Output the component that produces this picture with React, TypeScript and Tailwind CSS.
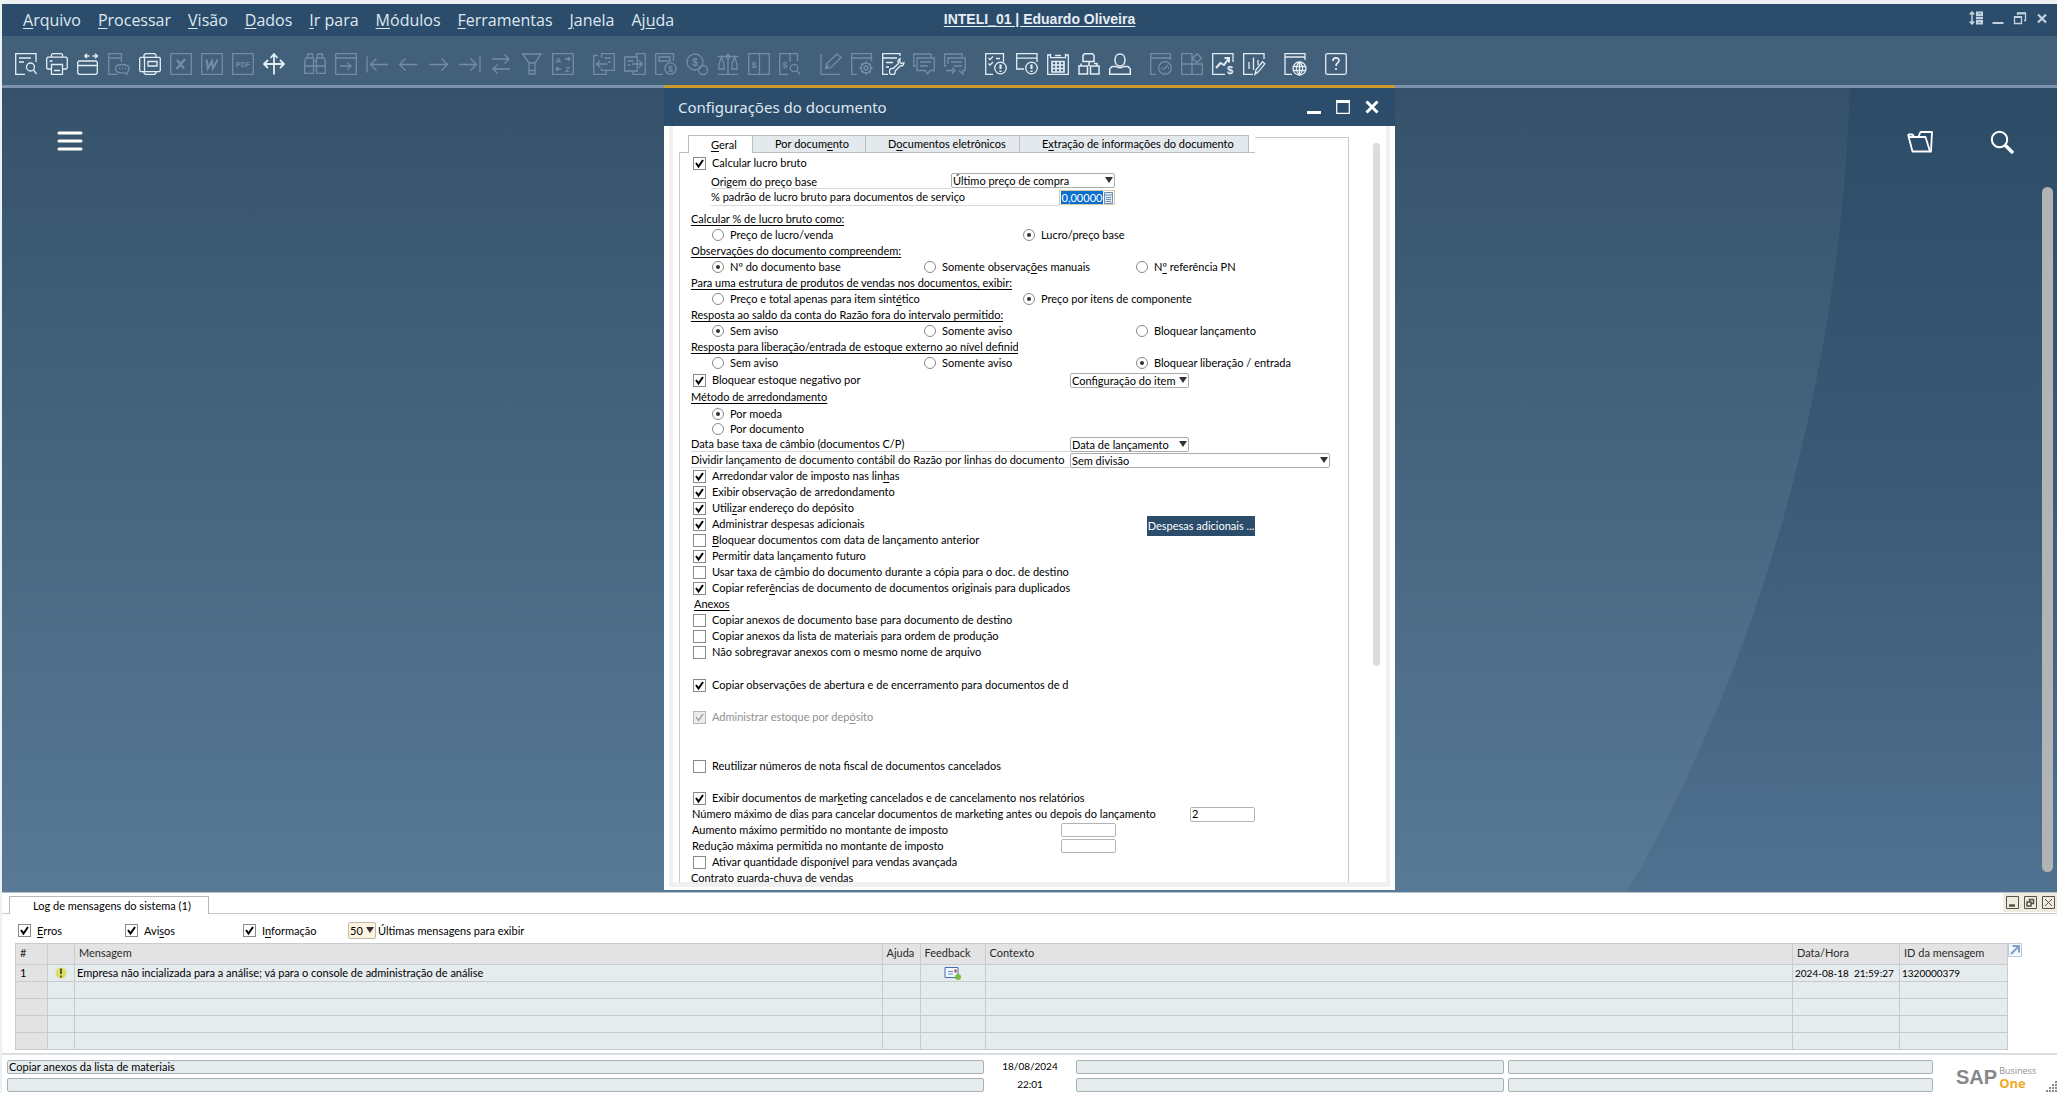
import { useId, type ReactNode } from 'react';

/* Renders a caption; the character after "&" is its access key. */
function Caption({ text }: { text: string }) {
  const i = text.indexOf('&');
  if (i < 0) return <>{text}</>;
  return (
    <>
      {text.slice(0, i)}
      <span className="underline underline-offset-2">{text[i + 1]}</span>
      {text.slice(i + 2)}
    </>
  );
}

/* ---------- toolbar drawings, on a 22 x 22 grid ---------- */

const dollar = (x: number, y: number, size = 9) => letter('$', x, y, size);
const letter = (t: string, x: number, y: number, size: number) => (
  <text x={x} y={y} fontSize={size} fontWeight="700" fill="currentColor" stroke="none" textAnchor="middle" className="font-['Liberation_Sans',sans-serif]">
    {t}
  </text>
);

type Tool = { name: string; on?: boolean; art: ReactNode };

const toolGroups: Tool[][] = [
  [
    { name: 'Visualizar', on: true, art: (<><path d="M21 9V.7H.7v20.600H10M4 5h12M4 9h5" /><circle cx="15.500" cy="14" r="4" /><path d="M18.500 17l3 4" /></>) },
    { name: 'Imprimir', on: true, art: (<><path d="M5.500 4V1.500l1-.8h9l1 .8V4M5.500 16H1.800L.7 15V5.500l1-1.300h18.600l1 1.300V15l-1.100 1h-3.700M3.500 8h3" /><path d="M5.500 11.500h11v9.800h-11zM8 17.500h6" /></>) },
    { name: 'Exportar', on: true, art: (<><path d="M.7 20V9.300L2 8h17l1.300 1.300V20L19 21.300H2zM.7 12.500h19.600M8 3h4.500M15.500 3H20M10 .7L7.700 3 10 5.300M18 .7L20.500 3 18 5.300" /></>) },
    { name: 'Mensagem', art: (<><path d="M13.500 9V.7H.7v20.600H10M.7 5h12.800" /><path d="M14 11.500c4 0 7 1 7 4s-1 3.500-2 4v1.800l-2.500-1.500c-5 .5-9-.5-9-4 0-3 3-4.300 6.500-4.300zM11 15.500h1M14 15.500h1M17 15.500h1" /></>) },
    { name: 'Fax', on: true, art: (<><path d="M5 4V2l1.300-1.300h9.400L17 2v2M5 18v2l1.300 1.300h9.400L17 20v-2M5.500 4.300H1.700l-1 1v12.400l1 1h3.800zM5.500 4.300h14.800l1 1v12.400l-1 1H5.500zM9 8.500h9V13H9z" /></>) },
    { name: 'Exportar para Excel', art: (<><path d="M.7.7h20.600v20.600H.7z" /><path d="M7 7l7 8.500M15 6l-8.500 10" strokeWidth="2.400" /></>) },
    { name: 'Exportar para Word', art: (<><path d="M.7.7h20.600v20.600H.7z" /><path d="M5.500 6.500l1.300 9 4-7.500 1 7.500 5-9" strokeWidth="2" /></>) },
    { name: 'Exportar para PDF', art: (<><path d="M.7.7h20.600v20.600H.7z" />{letter('PDF', 11, 13.500, 7)}</>) },
    { name: 'Arrastar e relacionar', on: true, art: (<path strokeWidth="1.800" d="M11 1v20.500M1 11h20M7.500 5L11 1l3.500 4M5 7l-4 4 4 4M17 7l4 4-4 4" />) },
  ],
  [
    { name: 'Procurar', art: (<><path d="M3.500 4V1h5v3M13.500 4V1h5v3M2 5h7.500v15.300H.7V8zM20 5h-7.500v15.300h8.800V8zM9.500 8h3M9.500 13h3M.7 13h8.800M12.500 13h8.800" /></>) },
    { name: 'Incluir', art: (<><path d="M.7.7h20.600v20.600H.7zM.7 5h20.600M5 13h11M12.500 9.500L16 13l-3.500 3.500" /></>) },
    { name: 'Primeiro registro', art: (<path d="M1 3.500v16M22 11.500H4.500M10.500 5.500l-6 6 6 6" />) },
    { name: 'Registro anterior', art: (<path d="M20.500 11.500h-18M8.500 5.500l-6 6 6 6" />) },
    { name: 'Próximo registro', art: (<path d="M1.500 11.500h18M13.500 5.500l6 6-6 6" />) },
    { name: 'Último registro', art: (<path d="M21 3.500v16M0 11.500h17.500M11.500 5.500l6 6-6 6" />) },
    { name: 'Atualizar', art: (<path d="M2 6h17M14.500 1.500L19 6l-4.500 4.500M20 16H3M7.500 11.500L3 16l4.500 4.500" />) },
    { name: 'Filtrar', art: (<path d="M1.500 1h18.500L14 10H8zM8 10v11h6V10M8 17.500h6" />) },
    { name: 'Classificar', art: (<><path d="M.7.7h20.600v20.600H.7zM13 6h5M16 4l2 2-2 2M9 16H4M6 14l-2 2 2 2" />{letter('A', 6.500, 10, 8)}{letter('Z', 15.500, 19, 8)}</>) },
  ],
  [
    { name: 'Documento base', art: (<><path d="M5 2.500H.7v18.800H13V18M8.500 5V.7h12.800v16.600H8.500V15M11.500 5h6M15 9h3M3.500 11h11M7 7.500L3.500 11 7 14.500" /></>) },
    { name: 'Documento destino', art: (<><path d="M12.500 4V.7h8.800v20.600H9V18M.7 4h12.600v14H.7zM3.500 8h6M3.500 12h3M8 11h10.500M15 7.500l3.500 3.500-3.500 3.500" /></>) },
    { name: 'Lucro bruto', art: (<><path d="M18.500 8V.7H.7v20.600H8M4 4h11v4H4z" /><circle cx="15.500" cy="15.500" r="5.700" />{dollar(15.500, 19)}</>) },
    { name: 'Meios de pagamento', art: (<><circle cx="9" cy="9" r="8" />{dollar(9, 12.500, 10)}<circle cx="17" cy="17" r="4.500" /></>) },
    { name: 'Volume e peso', art: (<><path d="M.7 3.500h20.600M11 .7v20.600M1 21.300h20" /><circle cx="11" cy="3.500" r="1.500" /><path d="M4.500 4L2 11v5h5v-5zM17.500 4L15 11v5h5v-5z" /></>) },
    { name: 'Lançamento contábil', art: (<><path d="M.7.7h20.600v20.600H.7zM11.500.7v20.600" />{dollar(6, 15)}</>) },
    { name: 'Visualizar lançamento', art: (<><path d="M18.500 8V.7H.7v20.600H9M11 .7V9" />{dollar(6, 15)}<circle cx="15" cy="15" r="3.700" /><path d="M18 18l3.300 3.500" /></>) },
  ],
  [
    { name: 'Editar layout', art: (<path d="M1 1v20.300h19M5.500 15.500l1-4.500L17 1l4 3.500L10.500 15zM5.500 15.500l3.500-3.500" />) },
    { name: 'Configurar formulário', art: (<><path d="M20.500 8V.7H.7v20.600H6M.7 5h19.800" /><circle cx="15" cy="15" r="2" /><circle cx="15" cy="15" r="5" /><path strokeWidth="2" d="M15 8.500V11M15 19v2.500M8.500 15H11M19 15h2.500M10.500 10.500l1.500 1.500M18 18l1.500 1.500M19.500 10.500L18 12M12 18l-1.500 1.500" /></>) },
    { name: 'Configurações do formulário', on: true, art: (<><path d="M18 3V.7H.7v20.600H6M.7 5H15M4 9.500h7M4 14h3" /><path d="M18 5.500c-2 1.200-2.500 3-1.500 5L11 15.500c-2-.5-3.500.5-3.500 3 0 2 1 2.800 1 2.800h3.800c1.200-1.300 1.200-2.600 1-3.600l5.200-5c1.800.5 3.300-.4 3.500-3l-2.800.8-1.500-1.800z" /></>) },
    { name: 'Alertas', art: (<path d="M18 4V1H.7v12H3M4 5h17.300v12.500H17l-2.500 3.500-2.500-3.500H4zM7 9h11M7 13h8" />) },
    { name: 'Responder', art: (<path d="M18 4V1H.7v12H2M4 11V5h17.300v12.500H19v3.800l-4-3.800M7 9h11M10 13h8M2 17.500h9M8 14.500l3 3-3 3" />) },
  ],
  [
    { name: 'Atividades', on: true, art: (<><path d="M18.500 9V.7H.7v20.600H8M3.500 5l1.500 1.500 3-3M3.500 10.500L5 12l3-3M11 5.500h4" /><circle cx="15.500" cy="15" r="5.800" /><path strokeWidth="2.200" d="M15.500 11.500v4.500M15.500 17.500v1.500" /></>) },
    { name: 'Mensagens e alertas', on: true, art: (<><path d="M21 9V.7H.7v4.500H21M.7 5v11H8" /><circle cx="15.500" cy="15" r="5.800" /><path strokeWidth="2.200" d="M15.500 11.500v4.500M15.500 17.500v1.500" /></>) },
    { name: 'Calendário', on: true, art: (<><path d="M3.500 2H.7v19.300h20.600V2h-2.800M3.500.7v4h15v-4M8 2.500h6" /><path d="M5 8.500h12V19H5zM5 12h12M5 15.500h12M9 8.500V19M13 8.500V19" strokeWidth="1.700" /></>) },
    { name: 'Organograma', on: true, art: (<path strokeWidth="1.500" d="M5 8.500V2.500L6.500.7h8L16 2.500v6zM3 10.500V13H9M19 13v-2.500h-3M11 9v4M1 13h8.500v8H1zM12.500 13H21v8h-8.500z" />) },
    { name: 'Parceiros', on: true, art: (<><path strokeWidth="1.500" d="M11 1c3 0 5 2.500 5 6s-2 6-5 6-5-2.500-5-6 2-6 5-6zM7 13.500H3L.7 16v5.300h20.600V16L19 13.500h-4c-2 1.500-6 1.500-8 0z" /></>) },
  ],
  [
    { name: 'Histórico', art: (<><path d="M20.500 7V.7H.7v20.600H6M.7 5h19.800" /><circle cx="15" cy="15" r="6.300" /><path d="M15 15l3-3M13 17l2-2M11 15h1M18 15h1M15 19v1" /></>) },
    { name: 'Painéis', art: (<path d="M.7.7H11v20.600H.7zM.7 11h20.600v10.300H11M16 .700l4.500 4.500L16 9.500l-4.500-4.300z" />) },
    { name: 'Análise de vendas', on: true, art: (<><path d="M21 9V.7H.7v20.600H13" /><path d="M4 15l4.500-5 3.500 2 5-7M12.500 5H17v4.500" strokeWidth="2" />{dollar(18, 21, 11)}</>) },
    { name: 'Relatórios', on: true, art: (<path d="M21 6V.7H.7v20.600H10M6 9v7M10.500 4.500V17M15 7v5M12 21.300l1-4.500 6.500-8 2.300 2-6.500 8z" />) },
  ],
  [
    { name: 'Navegador', on: true, art: (<><path d="M21 7V.7H1v20.600H8M1 4h20" /><circle cx="15.500" cy="15.500" r="6.500" /><path d="M9 13.500h13M9 17.500h13M15.500 9v13M15.500 9c-4 4-4 9 0 13M15.500 9c4 4 4 9 0 13" /></>) },
  ],
  [
    { name: 'Ajuda', on: true, art: (<><rect x=".7" y=".7" width="20.600" height="20.600" rx="1.500" /><path strokeWidth="1.700" d="M8 8c0-4 6-4 6-.5 0 2.500-3 2.500-3 5.500M11 15v2" /></>) },
  ],
];

function Toolbar() {
  return (
    <div role="toolbar" className="flex h-[49px] shrink-0 items-center gap-[10px] bg-[#42607a] pt-[6px] pl-2">
      {toolGroups.map((group, g) => (
        <div key={g} className="flex">
          {group.map((t) => (
            <button key={t.name} type="button" aria-label={t.name} className={t.on ? 'flex w-[31px] justify-center text-[#e3edf5]' : 'flex w-[31px] justify-center text-[#748da5]'}>
              <svg viewBox="0 0 22 22" className="size-[22px] overflow-visible fill-none stroke-current" strokeWidth="1.300" aria-hidden="true">
                {t.art}
              </svg>
            </button>
          ))}
        </div>
      ))}
    </div>
  );
}

/* ---------- header ---------- */

const menus = ['&Arquivo', '&Processar', '&Visão', '&Dados', '&Ir para', '&Módulos', '&Ferramentas', '&Janela', 'Aj&uda'];

function MenuBar() {
  return (
    <header className="grid h-8 shrink-0 grid-cols-[1fr_auto_1fr] items-center bg-[#2c4c6b] text-[#dfe8f0]">
      <nav className="flex gap-[17px] pl-[21px] font-['Open_Sans',sans-serif] text-base leading-6">
        {menus.map((m) => (
          <button key={m} type="button" className="whitespace-nowrap">
            <Caption text={m} />
          </button>
        ))}
      </nav>
      <a href="#empresa" className="ml-5 pb-[2px] font-['Liberation_Sans',sans-serif] text-sm leading-5 font-bold text-[#e6edf4] underline underline-offset-2">
        INTELI_01 | Eduardo Oliveira
      </a>
      <div className="flex justify-end gap-2 pr-2 pb-1 text-[#c3d3df]">
        <button type="button" aria-label="Ordenar">
          <svg viewBox="0 0 14 14" className="size-[14px] fill-none stroke-current" strokeWidth="1.500" aria-hidden="true">
            <path d="M3 1v12M.700 3.500L3 1l2.300 2.500M.700 10.500L3 13l2.300-2.500" />
            <path d="M8 1.500h5v2.500H8zM8 10h5v2.500H8z" strokeWidth="2" /><path d="M7 7h7" strokeWidth="2.500" />
          </svg>
        </button>
        <button type="button" aria-label="Minimizar">
          <svg viewBox="0 0 14 14" className="size-[14px] fill-none stroke-current" strokeWidth="2" aria-hidden="true"><path d="M1.500 12h11" /></svg>
        </button>
        <button type="button" aria-label="Restaurar">
          <svg viewBox="0 0 14 14" className="size-[14px] fill-none stroke-current" strokeWidth="1.300" aria-hidden="true">
            <path d="M1.500 6h7v6.500h-7zM4.500 4V2.500h8v7H11" /><path d="M1 6h8M4 2.200h9" strokeWidth="2" />
          </svg>
        </button>
        <button type="button" aria-label="Fechar">
          <svg viewBox="0 0 14 14" className="size-[14px] fill-none stroke-current" strokeWidth="2.200" aria-hidden="true"><path d="M3 3.500l8 8M11 3.500l-8 8" /></svg>
        </button>
      </div>
    </header>
  );
}

/* ---------- form controls ---------- */

function Check({ text, checked = false, disabled = false }: { text: string; checked?: boolean; disabled?: boolean }) {
  return (
    <label className={`flex items-center gap-[6px] pl-[2px] whitespace-nowrap ${disabled ? 'text-[#8f8f8f]' : ''}`}>
      <span className="relative flex size-[13px] shrink-0">
        <input
          type="checkbox"
          defaultChecked={checked}
          disabled={disabled}
          className="peer size-[13px] appearance-none border border-[#8a8a8a] bg-white disabled:border-[#b5b5b5] disabled:bg-[#ececec]"
        />
        <svg viewBox="0 0 13 13" className="pointer-events-none absolute inset-0 hidden size-[13px] fill-none stroke-current peer-checked:block" strokeWidth={disabled ? 1.200 : 2} aria-hidden="true">
          <path d="M3 6l2.500 3.500L10 3" />
        </svg>
      </span>
      <span>
        <Caption text={text} />
      </span>
    </label>
  );
}

function Radio({ text, name, checked = false }: { text: string; name: string; checked?: boolean }) {
  return (
    <label className="flex items-center gap-[6px] whitespace-nowrap">
      <input
        type="radio"
        name={name}
        defaultChecked={checked}
        className="grid size-3 shrink-0 appearance-none place-items-center rounded-full border border-[#8c8c8c] bg-white checked:before:size-1 checked:before:rounded-full checked:before:bg-[#333] checked:before:content-['']"
      />
      <span>
        <Caption text={text} />
      </span>
    </label>
  );
}

function RadioGroup({ title, options, value, cols }: { title: string; options: string[]; value: number; cols: string }) {
  const name = useId();
  return (
    <fieldset>
      <legend className="h-4 max-w-[327px] overflow-hidden whitespace-nowrap underline underline-offset-2">{title}</legend>
      <div className={`grid h-4 items-center pl-[21px] ${cols}`}>
        {options.map((o, i) => (
          <Radio key={o} text={o} name={name} checked={i === value} />
        ))}
      </div>
    </fieldset>
  );
}

function Select({ label, value, className }: { label: string; value: string; className: string }) {
  return (
    <span className={`relative flex h-[15px] shrink-0 ${className}`}>
      <select aria-label={label} className="w-full appearance-none truncate rounded-xs border border-[#a9adb0] bg-transparent pl-px leading-[13px]">
        <option>{value}</option>
      </select>
      <svg viewBox="0 0 8 6" className="pointer-events-none absolute top-1 right-[2px] h-[6px] w-2 fill-[#333]" aria-hidden="true">
        <path d="M0 0h8L4 6z" />
      </svg>
    </span>
  );
}

const threeCols = 'grid-cols-[212px_212px_1fr]';
const twoCols = 'grid-cols-[311px_1fr]';

/* ---------- settings window ---------- */

const tabs = [
  { text: '&Geral', width: 'w-16' },
  { text: 'Por docum&ento', width: 'w-[113px]' },
  { text: 'D&ocumentos eletrônicos', width: 'w-[154px]' },
  { text: 'E&xtração de informações do documento', width: 'w-[230px]' },
];

function GeneralPage() {
  const ids = { pct: useId(), days: useId(), up: useId(), down: useId() };
  const round = useId();
  return (
    <div className="flex-1 border-x border-[#c9c9c9] pt-[2px] pl-[11px]">
      <div className="flex h-4 items-center"><Check text="Calcular lucro bruto" checked /></div>
      <div className="mt-px flex h-[17px] items-center pl-5">
        <span className="flex h-4 w-60 items-end border-b border-[#d5d9dc] leading-[13px]">Origem do preço base</span>
        <Select label="Origem do preço base" value="Último preço de compra" className="w-[164px]" />
      </div>
      <div className="flex h-[17px] items-center pl-5">
        <label htmlFor={ids.pct} className="flex h-4 w-[348px] items-center border-b border-[#d5d9dc]">% padrão de lucro bruto para documentos de serviço</label>
        <span className="flex h-[15px] w-14 items-center justify-between border border-[#d8c9a8] px-px">
          <input id={ids.pct} defaultValue="0,00000" className="h-[13px] w-[42px] bg-[#0b6fd0] text-center text-white outline-none" />
          <button type="button" aria-label="Calculadora">
            <svg viewBox="0 0 9 12" className="h-3 w-[9px] fill-none stroke-[#6d8fb5]" aria-hidden="true">
              <path d="M.500.500h8v11h-8z" fill="#dfeaf5" /><path d="M1 3h7M2 5.500h5M2 7.500h5M2 9.500h5" />
            </svg>
          </button>
        </span>
      </div>
      <div className="mt-[5px]">
        <RadioGroup title="Calcular % de lucro bruto como:" options={['Preço de lucro/venda', 'Lucro/preço base']} value={1} cols={twoCols} />
        <RadioGroup title="Observações do documento compreendem:" options={['Nº do documento base', 'Somente observaç&ões manuais', 'N&º referência PN']} value={0} cols={threeCols} />
        <RadioGroup title="Para uma estrutura de produtos de vendas nos documentos, exibir:" options={['Preço e total apenas para item sint&ético', 'Preço por itens de componente']} value={1} cols={twoCols} />
        <RadioGroup title="Resposta ao saldo da conta do Razão fora do intervalo permitido:" options={['Sem aviso', 'Somente aviso', 'Bloquear lançamento']} value={0} cols={threeCols} />
        <RadioGroup title="Resposta para liberação/entrada de estoque externo ao nível definid" options={['Sem aviso', 'Somente aviso', 'Bloquear liberação / entrada']} value={2} cols={threeCols} />
      </div>
      <div className="flex h-[18px] items-center">
        <div className="flex h-4 w-[379px] items-center"><Check text="Bloquear estoque negativo por" checked /></div>
        <Select label="Bloquear estoque negativo por" value="Configuração do item" className="w-[119px]" />
      </div>
      <fieldset>
        <legend className="h-[17px] underline underline-offset-2">Método de arredondamento</legend>
        <div className="flex h-[15px] items-center pl-[21px]"><Radio name={round} text="Por moeda" checked /></div>
        <div className="flex h-[15px] items-center pl-[21px]"><Radio name={round} text="Por documento" /></div>
      </fieldset>
      <div className="flex h-4 items-center">
        <span className="h-4 w-[379px] border-b border-[#d5d9dc]">Data base taxa de câmbio (documentos C/P)</span>
        <Select label="Data base taxa de câmbio" value="Data de lançamento" className="w-[119px]" />
      </div>
      <div className="flex h-4 items-center">
        <span className="h-4 w-[379px] border-b border-[#d5d9dc] whitespace-nowrap">Dividir lançamento de documento contábil do Razão por linhas do documento</span>
        <Select label="Dividir lançamento por linhas" value="Sem divisão" className="w-[260px]" />
      </div>
      <div className="flex flex-col *:h-4">
        <Check text="Arredondar valor de imposto nas lin&has" checked />
        <Check text="Exibir observação de arredondamento" checked />
        <Check text="Utili&zar endereço do depósito" checked />
        <div className="flex">
          <div className="w-[456px]"><Check text="Administrar despesas adicionais" checked /></div>
          <button type="button" className="h-5 w-[108px] shrink-0 bg-[#2c4c6b] text-center whitespace-nowrap text-white">Despesas adicionais ...</button>
        </div>
        <Check text="&Bloquear documentos com data de lançamento anterior" />
        <Check text="Permitir data lançamento futuro" checked />
        <Check text="Usar taxa de c&âmbio do documento durante a cópia para o doc. de destino" />
        <Check text="Copiar refer&ências de documento de documentos originais para duplicados" checked />
        <h3 className="pl-[3px] underline underline-offset-2">Anexos</h3>
        <Check text="Copiar anexos de documento base para documento de destino" />
        <Check text="Copiar anexos da lista de materiais para ordem de produção" />
        <Check text="Não sobregravar anexos com o mesmo nome de arquivo" />
      </div>
      <div className="mt-[17px] flex h-4 items-center"><Check text="Copiar observações de abertura e de encerramento para documentos de d" checked /></div>
      <div className="mt-4 flex h-4 items-center"><Check text="Administrar estoque por dep&ósito" checked disabled /></div>
      <div className="mt-[33px] flex h-4 items-center"><Check text="Reutilizar números de nota fiscal de documentos cancelados" /></div>
      <div className="mt-4 flex h-4 items-center"><Check text="Exibir documentos de mar&keting cancelados e de cancelamento nos relatórios" checked /></div>
      <div className="flex h-4 items-center">
        <label htmlFor={ids.days} className="w-[499px] pl-px">Número máximo de dias para cancelar documentos de marketing antes ou depois do lançamento</label>
        <input id={ids.days} defaultValue="2" className="h-[15px] w-[65px] rounded-xs border border-[#b0b4b7] pl-px" />
      </div>
      <div className="flex h-4 items-center">
        <label htmlFor={ids.up} className="w-[370px] pl-px">Aumento máximo permitido no montante de imposto</label>
        <input id={ids.up} className="h-[14px] w-[55px] rounded-xs border border-[#b0b4b7]" />
      </div>
      <div className="flex h-4 items-center">
        <label htmlFor={ids.down} className="w-[370px] pl-px">Redução máxima permitida no montante de imposto</label>
        <input id={ids.down} className="h-[14px] w-[55px] rounded-xs border border-[#b0b4b7]" />
      </div>
      <div className="flex h-4 items-center"><Check text="Ativar quantidade dispon&ível para vendas avançada" /></div>
      <p>Contrato guarda-chuva de vendas</p>
    </div>
  );
}

function SettingsWindow() {
  return (
    <section aria-label="Configurações do documento" className="relative -mt-[3px] mb-[2px] flex min-h-0 flex-col border-t-[3px] border-[#c99a2e]">
      <div className="flex h-[38px] shrink-0 items-center justify-between bg-[#2c4c6b] pr-4 pl-[14px] text-[#dfe8f0]">
        <h2 className="font-['Noto_Sans',sans-serif] text-[15px] leading-5">Configurações do documento</h2>
        <div className="flex gap-[15px] text-white">
          <button type="button" aria-label="Minimizar">
            <svg viewBox="0 0 14 14" className="size-[14px] fill-none stroke-current" strokeWidth="3" aria-hidden="true"><path d="M0 12.500h14" /></svg>
          </button>
          <button type="button" aria-label="Maximizar">
            <svg viewBox="0 0 14 14" className="size-[14px] fill-none stroke-current" strokeWidth="1.200" aria-hidden="true"><path d="M.700 1h12.600v12.300H.700z" /><path d="M0 1.500h14" strokeWidth="3" /></svg>
          </button>
          <button type="button" aria-label="Fechar">
            <svg viewBox="0 0 14 14" className="size-[14px] fill-none stroke-current" strokeWidth="3" aria-hidden="true"><path d="M1.500 1.500l11 11M12.500 1.500l-11 11" /></svg>
          </button>
        </div>
      </div>
      <div className="flex min-h-0 flex-1 bg-white px-[5px] pb-[3px]">
        <div className="flex min-h-0 flex-1 overflow-hidden border-x-4 border-b-[5px] border-[#f0f0f0] pl-[6px] text-[11px] leading-4">
          <div className="flex w-[670px] flex-col pt-[9px]">
            <div role="tablist" className="flex h-[18px] shrink-0 items-end">
              <div className="w-[9px] border-b border-[#b9bdc0]" />
              {tabs.map((t, i) => (
                <button
                  key={t.text}
                  type="button"
                  role="tab"
                  aria-selected={i === 0}
                  className={`h-[18px] border-t border-[#b9bdc0] pl-[22px] text-left whitespace-nowrap ${t.width} ${i === 0 ? 'border-l bg-white' : 'border-b border-l bg-[#e4e9ed]'} ${i === 3 ? 'border-r' : ''}`}
                >
                  <Caption text={t.text} />
                </button>
              ))}
              <div className="w-[6px] border-b border-[#b9bdc0]" />
              <div className="h-4 flex-1 border-t border-r border-[#c9c9c9]" />
            </div>
            <GeneralPage />
          </div>
          <div className="ml-6 w-[7px] pt-[17px]">
            <div className="h-[523px] rounded-full bg-[#dcdcdc]" />
          </div>
        </div>
      </div>
    </section>
  );
}

/* ---------- desktop ---------- */

function Desktop() {
  return (
    <main className="relative grid min-h-0 flex-1 grid-cols-[1fr_731px_1fr] grid-rows-[minmax(0,1fr)] border-t-[3px] border-[#7d92ab] bg-linear-to-b from-[#36526b] to-[#587a96]">
      <svg viewBox="0 0 2055 804" preserveAspectRatio="none" className="pointer-events-none absolute inset-0 size-full" aria-hidden="true">
        <defs>
          <linearGradient id="shade" x1="0" y1="0" x2="0" y2="1">
            <stop offset="0" stopColor="#2b4b67" />
            <stop offset="0.500" stopColor="#3b5a77" />
            <stop offset="1" stopColor="#507190" />
          </linearGradient>
        </defs>
        <path d="M1848 0C1838 290 1760 570 1625 804H2055V0z" fill="url(#shade)" />
      </svg>
      <div className="relative pt-[43px] pl-[55px]">
        <button type="button" aria-label="Menu principal" className="text-white">
          <svg viewBox="0 0 26 20" className="h-5 w-[26px] fill-none stroke-current" strokeWidth="3" strokeLinecap="round" aria-hidden="true"><path d="M2 2h22M2 10h22M2 18h22" /></svg>
        </button>
      </div>
      <SettingsWindow />
      <div className="relative flex flex-col items-end pr-1">
        <div className="flex h-[99px] shrink-0 items-start gap-[57px] pt-[42px] pr-[39px] text-white">
          <button type="button" aria-label="Abrir">
            <svg viewBox="0 0 26 23" className="h-[23px] w-[26px] fill-none stroke-current" strokeWidth="1.800" strokeLinejoin="round" aria-hidden="true">
              <path d="M1 4.500L5.500 21.500H23L18.500 7H2" /><path d="M1 4.500H5.500L7 6.500M11.500 6.500L13.500 2H25L24 21.500H23" />
            </svg>
          </button>
          <button type="button" aria-label="Pesquisar">
            <svg viewBox="0 0 24 24" className="size-6 fill-none stroke-current" strokeWidth="2" strokeLinecap="round" aria-hidden="true">
              <circle cx="9.500" cy="9.500" r="7.700" /><path d="M16 16l6 6" strokeWidth="3.500" />
            </svg>
          </button>
        </div>
        <div className="mb-5 w-[11px] flex-1 rounded-full bg-[#b1b3b5]" />
      </div>
    </main>
  );
}

/* ---------- message log ---------- */

const blank = [2, 3, 4, 5];
const cell = 'h-[17px] border border-[#c6cbce] p-0 leading-[14px]';
const head = 'border border-[#c9cccf] p-0 pb-[2px] pl-1 text-left font-normal';

function MessageLog() {
  return (
    <section aria-label="Log de mensagens do sistema" className="shrink-0 border-t border-[#b9c2ca] bg-white text-[11px] leading-4">
      <div className="flex h-[21px] items-end">
        <div className="w-[7px] border-b border-[#c6c9cb]" />
        <h2 className="h-[18px] w-[200px] border-x border-t border-[#b5b8ba] pl-[23px] leading-[18px]">Log de mensagens do sistema (1)</h2>
        <div className="flex h-[21px] flex-1 items-start justify-end border-b border-[#c6c9cb]">
          <div className="flex h-[19px] items-center gap-[5px] bg-[#efebdf] pr-[2px] pl-[3px] text-[#55524a]">
            <button type="button" aria-label="Minimizar log">
              <svg viewBox="0 0 13 13" className="size-[13px] fill-none stroke-current" aria-hidden="true"><path d="M.500.500h12v12H.500z" /><path d="M3 9.500h6" strokeWidth="2.500" /></svg>
            </button>
            <button type="button" aria-label="Restaurar log">
              <svg viewBox="0 0 13 13" className="size-[13px] fill-none stroke-current" aria-hidden="true"><path d="M.500.500h12v12H.500z" /><path d="M3 6h4v4H3zM5.500 5.500V3.500h4v4H7.500" strokeWidth="1.500" /></svg>
            </button>
            <button type="button" aria-label="Fechar log">
              <svg viewBox="0 0 13 13" className="size-[13px] fill-none stroke-current" aria-hidden="true"><path d="M.500.500h12v12H.500zM3 3l7 7M10 3l-7 7" /></svg>
            </button>
          </div>
        </div>
      </div>
      <div className="flex h-[29px] items-center pt-1 pl-[14px]">
        <div className="w-[107px]"><Check text="&Erros" checked /></div>
        <div className="w-[118px]"><Check text="Avi&sos" checked /></div>
        <div className="w-[107px]"><Check text="I&nformação" checked /></div>
        <label className="flex items-center gap-[2px]">
          <span className="relative flex">
            <select aria-label="Quantidade de mensagens" className="h-[17px] w-7 appearance-none rounded-xs border border-[#bdb9ab] bg-[#fdf4df] pl-px leading-[15px]">
              <option>50</option>
            </select>
            <svg viewBox="0 0 8 6" className="pointer-events-none absolute top-[5px] right-[2px] h-[6px] w-2 fill-[#333]" aria-hidden="true"><path d="M0 0h8L4 6z" /></svg>
          </span>
          Últimas mensagens para exibir
        </label>
      </div>
      <div className="flex items-start pr-[49px] pb-[3px] pl-[13px]">
        <table className="w-full min-w-0 flex-1 table-fixed border-collapse bg-[#e6ebee]">
          <colgroup>
            <col className="w-8" /><col className="w-[27px]" /><col /><col className="w-[38px]" /><col className="w-[65px]" /><col /><col className="w-[107px]" /><col className="w-[108px]" />
          </colgroup>
          <thead>
            <tr className="h-[21px] bg-[#e3e3e3] text-[#2a2a2a]">
              <th className={head}>#</th>
              <th className={head} aria-label="Tipo" />
              <th className={head}>Mensagem</th>
              <th className={head}>Ajuda</th>
              <th className={head}>Feedback</th>
              <th className={head}>Contexto</th>
              <th className={head}>Data/Hora</th>
              <th className={head}>ID da mensagem</th>
            </tr>
          </thead>
          <tbody>
            <tr className="h-[17px]">
              <td className={`${cell} bg-[#e3e3e3]`}><span className="pl-1">1</span></td>
              <td className={cell}>
                <svg viewBox="0 0 12 12" className="mx-auto size-3" aria-hidden="true">
                  <circle cx="6" cy="6" r="5.500" fill="#d9e06a" /><path d="M6 1.500v5.500M6 8.500v2" stroke="#5a5a20" strokeWidth="2" />
                </svg>
              </td>
              <td className={cell}><span className="pl-[2px]">Empresa não incializada para a análise; vá para o console de administração de análise</span></td>
              <td className={cell} />
              <td className={cell}>
                <svg viewBox="0 0 18 14" className="mx-auto h-[14px] w-[18px]" aria-hidden="true">
                  <path d="M1 1.500h13v10H1z" fill="#f5f9ff" stroke="#3f6fb5" /><path d="M4 5.500h5M4 8h5" stroke="#5b8bd0" /><path d="M10.500 3.500h2v3h-2z" fill="#b8322f" /><circle cx="14" cy="11" r="3" fill="#7dbb42" />
                </svg>
              </td>
              <td className={cell} />
              <td className={cell}><span className="pl-[2px] text-[10px] whitespace-pre">2024-08-18  21:59:27</span></td>
              <td className={cell}><span className="pl-[2px] text-[10px]">1320000379</span></td>
            </tr>
            {blank.map((n) => (
              <tr key={n} className="h-[17px]">
                <td className={`${cell} bg-[#e3e3e3]`} />
                <td className={cell} /><td className={cell} /><td className={cell} /><td className={cell} /><td className={cell} /><td className={cell} /><td className={cell} />
              </tr>
            ))}
          </tbody>
        </table>
        <button type="button" aria-label="Expandir tabela" className="-mr-[14px]">
          <svg viewBox="0 0 14 14" className="size-[14px] fill-none" aria-hidden="true"><path d="M.500.500h13v13H.500z" stroke="#bccbe0" fill="#f4f8fd" /><path d="M3 11l7-7M4.500 3H11v6.500" stroke="#7f9fc8" strokeWidth="2" /></svg>
        </button>
      </div>
    </section>
  );
}

/* ---------- status bar ---------- */

const field = 'h-[14px] rounded-xs border border-[#a9b1b6] bg-[#e6ebee] pl-px leading-3';

function StatusBar() {
  return (
    <footer className="flex h-10 shrink-0 items-end border-t-2 border-[#dcdfe1] bg-white pl-[5px] text-[11px]">
      <div className="grid flex-1 grid-cols-[977fr_92px_428fr_4px_425fr] gap-y-1 pb-px">
        <output className={field}>Copiar anexos da lista de materiais</output>
        <time className="text-center text-[10px] leading-3">18/08/2024</time>
        <output className={field} />
        <span />
        <output className={field} />
        <output className={field} />
        <time className="text-center text-[10px] leading-3">22:01</time>
        <output className={field} />
        <span />
        <output className={field} />
      </div>
      <div className="flex h-full w-[124px] items-center justify-between pl-[23px]">
        <div className="flex items-center gap-[2px] pt-[6px]">
          <span className="font-['Liberation_Sans',sans-serif] text-xl leading-6 font-bold text-[#858789]">SAP</span>
          <span className="flex flex-col font-['Open_Sans',sans-serif]">
            <span className="text-[9px] leading-3 text-[#8d8f91]">Business</span>
            <span className="text-[13px] leading-3 font-bold text-[#f0ab25]">One</span>
          </span>
        </div>
        <svg viewBox="0 0 12 12" className="size-3 self-end fill-[#8a8a8a]" aria-hidden="true">
          <path d="M10 0h2v2h-2zM7 3h2v2H7zM10 3h2v2h-2zM4 6h2v2H4zM7 6h2v2H7zM10 6h2v2h-2zM1 9h2v2H1zM4 9h2v2H4zM7 9h2v2H7zM10 9h2v2h-2z" />
        </svg>
      </div>
    </footer>
  );
}

export default function App() {
  return (
    <div className="flex h-screen flex-col overflow-hidden border-t-4 border-l-2 border-[#eef1f4] bg-white font-['Lato',sans-serif] text-black">
      <MenuBar />
      <Toolbar />
      <Desktop />
      <MessageLog />
      <StatusBar />
    </div>
  );
}
